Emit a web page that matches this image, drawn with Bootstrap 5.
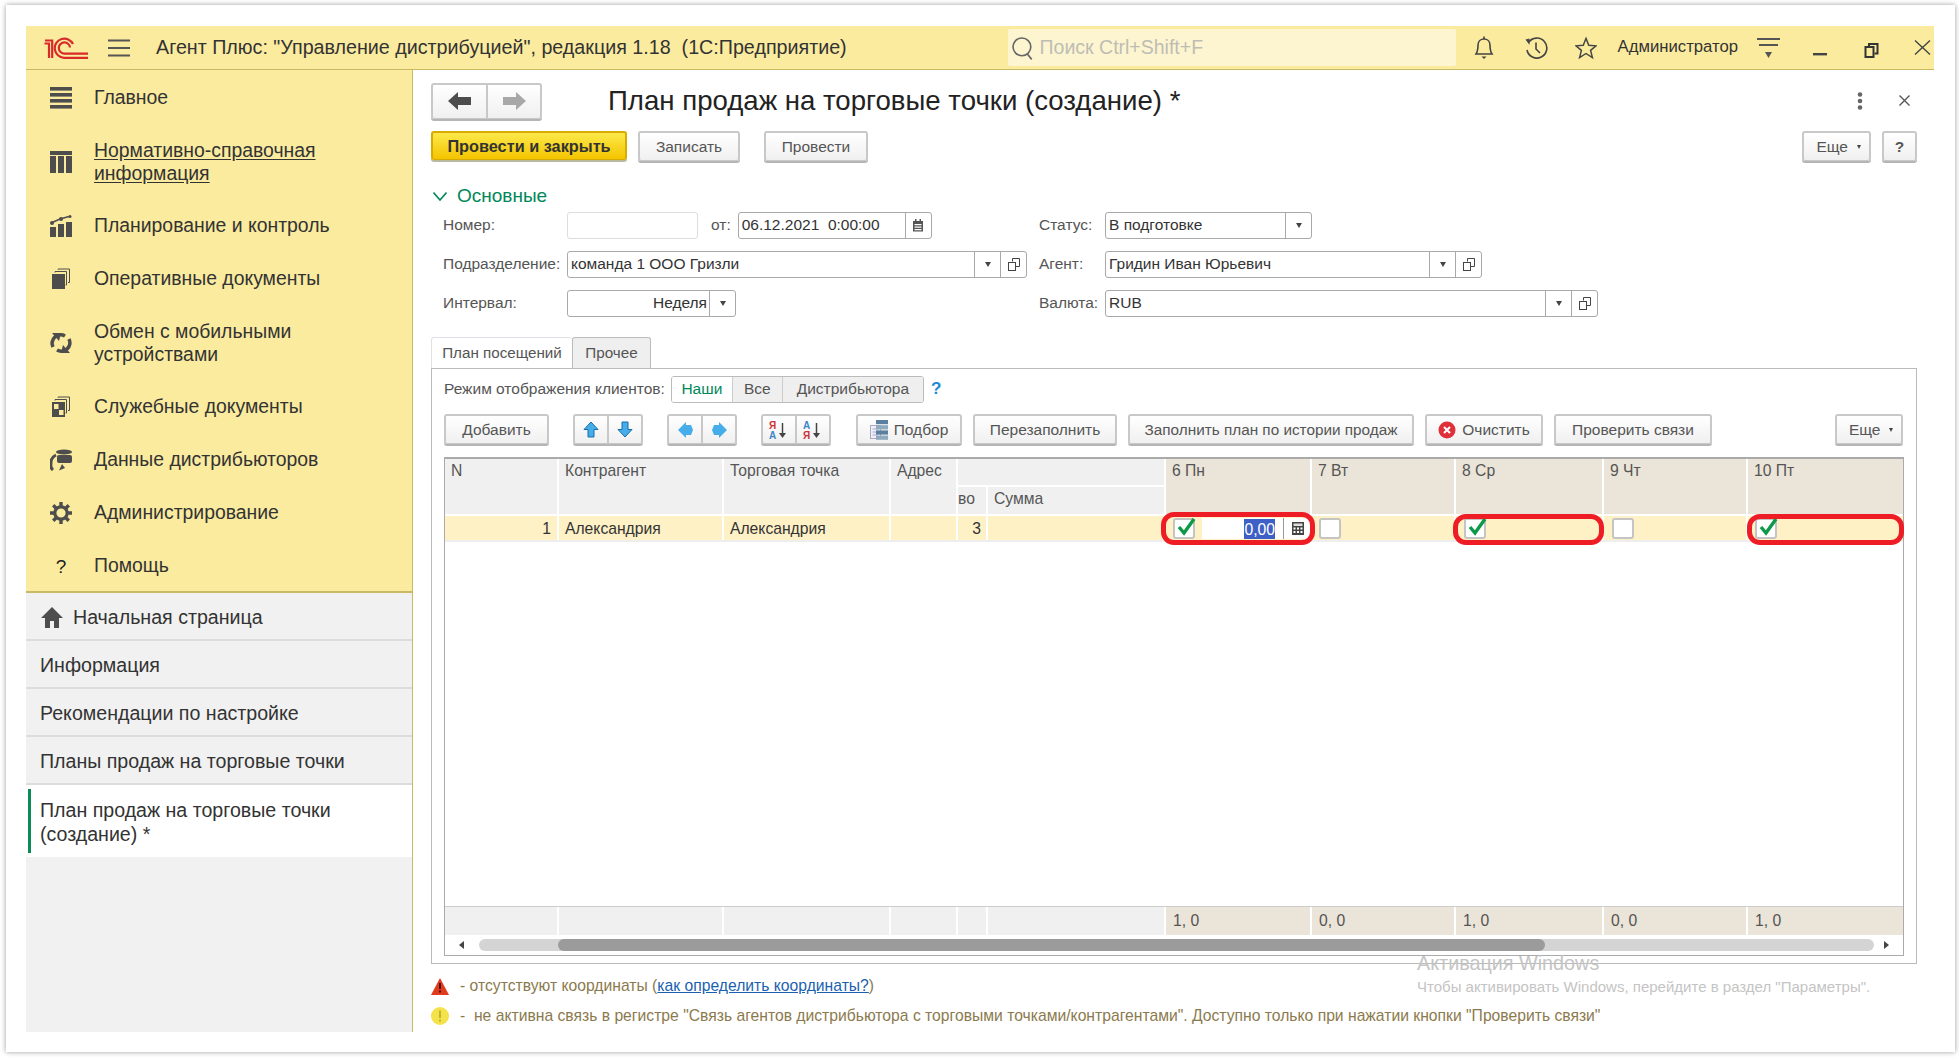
<!DOCTYPE html>
<html lang="ru">
<head>
<meta charset="utf-8">
<title>План продаж</title>
<link rel="stylesheet" href="https://cdn.jsdelivr.net/npm/bootstrap@5.3.0/dist/css/bootstrap.min.css">
<style>
html,body{height:100%;margin:0;background:#fff;overflow:hidden}
body{font-family:"Liberation Sans",Arial,sans-serif;font-size:15.5px;color:#333;line-height:1.2}
.appwin{margin:5px 4px 0 6px;height:1047px;padding:21px 21px 20px 20px;background:#fff;box-shadow:0 0 5px rgba(0,0,0,.4)}
.inner{height:1006px}
.topbar{height:44px;background:#fbeb9f;border-bottom:1px solid #c9b965;font-size:19.7px;color:#333}
.logo1c{margin-left:18px;width:44px;height:22px}
.burger{margin-left:20px;width:22px;height:18px}
.apptitle{margin-left:26px;white-space:pre}
.searchbox{position:relative;margin-left:auto;width:448px;height:37px;background:#fdf5d0;border-radius:2px;color:#bdbdb5;font-size:19.5px;padding-left:32px;margin-right:17px}
.searchbox svg{position:absolute;left:3px;top:7px}
.ticon{width:22px;height:24px}
.tuser{font-size:16.7px;margin:0 19px 0 12px}
.sidebar{width:387px;background:#f1f1f1;border-right:1px solid #c9b965}
.menuyellow{background:#fbeb9f;height:523px;border-bottom:2px solid #c9b965;font-size:19.4px;color:#333}
.mitem{position:absolute;left:0;right:0;display:flex;align-items:center;line-height:23px}
.mwrap{position:relative}
.mico{width:22px;height:22px;margin-left:24px;margin-right:22px;flex:none}
.mhelp{font-size:19px;text-align:center;color:#222}
.menuyellow u{text-underline-offset:2px}
.pagelist{font-size:19.6px}
.pagelist .list-group-item{background:#f1f1f1;border-color:#dcdcdc;border-width:0 0 2px;color:#333;padding:2px 10px 0 14px;height:48px;display:flex;align-items:center;line-height:24px}
.pagelist .list-group-item.curpage{background:#fff;height:72px;position:relative}
.curpage::before{content:"";position:absolute;left:2px;top:4px;bottom:4px;width:3px;background:#0d8a55}
.mainpane{padding:12px 17px 0 18px;background:#fff}
.navbtns{width:111px;height:36px}
.pagetitle{font-size:27.6px;margin:0 0 0 66px;font-weight:400;color:#222;line-height:37px}
.btn1c{--bs-btn-padding-y:0;--bs-btn-padding-x:0;--bs-btn-font-size:15.5px;--bs-btn-border-radius:3px;height:30px;background:linear-gradient(#fff,#f0f0f0);border:2px solid #c8c8c8;border-bottom-width:1px;box-shadow:0 2px 0 #b5b5b5;color:#555;display:inline-flex;align-items:center;justify-content:center;white-space:nowrap;flex:none;line-height:1}
.btn1c:hover{background:#eee}
.btnmain{--bs-btn-font-size:16.3px;background:linear-gradient(#fce94a,#f4c400);border-color:#d8ab00;box-shadow:0 2px 0 #b9b9a0;color:#333;font-weight:700;width:196px;height:29px}
.btnmore{padding-left:4px}
.sect{color:#00885a;font-size:19px;margin-top:24px;height:20px;padding-left:2px;line-height:20px}
.sect svg{margin-right:10px}
.frm{margin-top:6px}
.frow{height:27px;margin-bottom:12px;display:flex;align-items:center;color:#555}
.flab{padding-left:12px;width:136px;flex:none}
.frlab{width:66px;flex:none}
.fld{height:27px;border:1px solid #a9a9a9;border-radius:3px;background:#fff;display:flex;align-items:center;color:#333;flex:none;overflow:hidden}
.fld .ftxt{flex:1;padding-left:3px;white-space:nowrap}
.fbtn{width:26px;height:100%;border-left:1px solid #a9a9a9;display:flex;align-items:center;justify-content:center;flex:none}
.caret1{width:0;height:0;border-left:3px solid transparent;border-right:3px solid transparent;border-top:5px solid #444}
.tabs1c{margin-top:8px;--bs-nav-tabs-border-width:0;height:31px;flex-wrap:nowrap}
.tabs1c .nav-link{color:#555;padding:0;height:31px;display:flex;align-items:center;justify-content:center;border:1px solid #bbb;border-bottom:0;border-radius:3px 3px 0 0;background:#efefef;font-size:15.2px}
.tabs1c .nav-link.active{background:#fff;color:#555;border-right:0}
.tabpane{height:596px;border:1px solid #bbb;padding:7px 12px 7px 12px}
.moderow{height:27px;color:#555}
.radgrp{margin-left:6px;height:27px;border:1px solid #bbb;border-radius:3px;overflow:hidden}
.radgrp span{display:flex;align-items:center;justify-content:center;height:100%;background:#efefef;border-left:1px solid #ccc}
.radgrp span:first-child{background:#fff;color:#00885a;border-left:0}
.toolrow{margin-top:11px;height:30px;gap:11px}
.grp{display:inline-flex;width:70px}
.grp .btn1c{width:35px}
.grp .btn1c:first-child{border-radius:3px 0 0 3px;border-right-width:1px}
.grp .btn1c:last-child{border-radius:0 3px 3px 0;border-left-width:1px}
.gridbox{margin-top:13px;height:500px;border:1px solid #aaa;border-top-width:2px;font-size:15.7px}
.gcols{display:grid;grid-template-columns:114px 165px 167px 67px 30px 178px 146px 144px 148px 144px 1fr}
.gh{background:#f0f0f0;border-right:2px solid #fff;border-bottom:2px solid #fff;color:#555;padding:3px 6px;white-space:nowrap;overflow:hidden}
.gh.day{background:#ebe4d8}
.gr2{grid-row:span 2}
.gc2{grid-column:span 2}
.ghead{grid-template-rows:28px 29px}
.grow{height:26px;border-bottom:2px solid #eee}
.gc{background:#fef1c6;border-right:2px solid #fff;padding:0 6px;height:24px;line-height:25px;position:relative;white-space:nowrap}
.gfoot{margin-top:auto;height:28px;border-top:1px solid #ccc}
.gf{background:#f0f0f0;border-right:2px solid #fff;padding:0 7px;line-height:28px;color:#555}
.gf.day{background:#ebe4d8}
.chk{position:absolute;left:7px;top:2px;width:22px;height:21px;background:#fff;border:2px solid #c4c4c4;border-radius:3px}
.chk svg{position:absolute;left:1px;top:-4px}
.hl{position:absolute;border:5.5px solid #ee1c25;border-radius:13px;pointer-events:none;z-index:2}
.cellinput{position:absolute;left:36px;right:-1px;top:2px;height:21px;background:#fff;display:flex;align-items:center;justify-content:flex-end;padding-right:36px}
.cellinput b{font-weight:400;background:#3d5fc6;color:#fff;line-height:18px;padding-top:2px}
.calc{position:absolute;right:0;top:0;bottom:0;width:28px;border-left:1px solid #999;display:flex;align-items:center;justify-content:center}
.hscroll{height:21px;padding:0 0 0 14px}
.strack{position:relative;flex:1;margin:0 10px 0 15px;height:12px;background:#d4d4d4;border-radius:6px}
.sthumb{position:absolute;left:79px;width:987px;top:0;bottom:0;background:#9b9b9b;border-radius:6px}
.sarr{width:0;height:0;border-top:4px solid transparent;border-bottom:4px solid transparent}
.notes{color:#8b7a4e;font-size:15.7px;padding-top:7px;position:relative}
.nline{height:30px;white-space:pre}
.nline a{color:#1b5fb0}
.nline svg{margin-right:11px;flex:none}
.winmark{position:absolute;left:986px;top:-10px;color:#c4c4c4;line-height:1}
.winmark .w1{font-size:19.8px;margin-bottom:5px}
.winmark .w2{font-size:15px}
.qm{color:#1b8ad6;font-size:17px;margin-left:7px;font-weight:700}
</style>
</head>
<body>
<div class="appwin">
<div class="inner d-flex flex-column">

  <header class="topbar d-flex align-items-center flex-none">
    <svg class="logo1c" viewBox="0 0 44 22" fill="none" stroke="#d92a2a">
      <path d="M0.5 6.5 L5 6.5 V21 M1 3.5 H8.2 V21" stroke-width="2.2"/>
      <path d="M29 7 A9.6 9.6 0 1 0 20 20.8 H44" stroke-width="2.2"/>
      <path d="M26 10.5 A5.6 5.6 0 1 0 20.5 16.6 H44" stroke-width="2.2"/>
    </svg>
    <svg class="burger" viewBox="0 0 22 18" stroke="#555" stroke-width="2"><path d="M0 1.5H22M0 9H22M0 16.5H22"/></svg>
    <span class="apptitle">Агент Плюс: "Управление дистрибуцией", редакция 1.18  (1С:Предприятие)</span>
    <div class="searchbox d-flex align-items-center">
      <svg width="24" height="25" viewBox="0 0 22 23" fill="none" stroke="#666" stroke-width="1.5"><circle cx="10" cy="10" r="8.2"/><path d="M15 16.5 L19 21.5"/></svg>
      Поиск Ctrl+Shift+F
    </div>
    <svg class="ticon" viewBox="0 0 22 24" fill="none" stroke="#444" stroke-width="1.6" style="margin-right:29px"><path d="M3 18 C5 15 5 13 5 9 C5 5 8 3 11 3 C14 3 17 5 17 9 C17 13 17 15 19 18 Z"/><path d="M11 0.5V3"/><path d="M8.5 20.5 H13.5 L11 23 Z" fill="#444" stroke="none"/></svg>
    <svg width="24" height="24" viewBox="0 0 24 24" fill="none" stroke="#444" stroke-width="1.6" style="margin-right:27px"><path d="M4.5 6.5 A10 10 0 1 1 3 14"/><path d="M1.5 3.5 L5.5 2.5 L5.5 9 Z" fill="#444" stroke="none"/><path d="M12 6.5V13L16 17"/></svg>
    <svg class="ticon" viewBox="0 0 24 24" fill="none" stroke="#444" stroke-width="1.6" style="margin-right:9px"><path d="M12 1.5 L15 9 L23 9.6 L17 14.6 L19 22.5 L12 18 L5 22.5 L7 14.6 L1 9.6 L9 9 Z"/></svg>
    <span class="tuser">Администратор</span>
    <svg width="23" height="24" viewBox="0 0 23 24" stroke="#555" stroke-width="2"><path d="M0 3H23M2 9H21"/><path d="M8 16H15L11.5 22Z" fill="#555" stroke="none"/></svg>
    <svg width="14" height="24" viewBox="0 0 14 24" fill="#444" style="margin-left:33px"><rect y="17" width="14" height="2.4"/></svg>
    <svg width="15" height="24" viewBox="0 0 15 24" fill="none" stroke="#333" stroke-width="2" style="margin-left:37px"><rect x="1.5" y="11" width="8" height="10"/><path d="M5 10V8H13.5V17.5H10.5"/></svg>
    <svg width="17" height="15" viewBox="0 0 17 15" fill="none" stroke="#444" stroke-width="1.4" style="margin-left:35px;margin-right:3px"><path d="M1 0.5L16 14.5M16 0.5L1 14.5"/></svg>
  </header>

  <div class="d-flex flex-grow-1" style="min-height:0">
    <aside class="sidebar flex-none d-flex flex-column">
      <nav class="menuyellow mwrap flex-none">
        <div class="mitem" style="top:16px"><svg class="mico" viewBox="0 0 22 22" fill="#4d4d4d"><rect y="0" width="22" height="3.6"/><rect y="6" width="22" height="3.6"/><rect y="12" width="22" height="3.6"/><rect y="18" width="22" height="3.6"/></svg>Главное</div>
        <div class="mitem" style="top:69px"><svg class="mico" viewBox="0 0 22 22" fill="#4d4d4d"><rect y="0" width="22" height="4"/><rect y="5" width="6" height="17"/><rect x="8" y="5" width="6" height="17"/><rect x="16" y="5" width="6" height="17"/></svg><span><u>Нормативно-справочная<br>информация</u></span></div>
        <div class="mitem" style="top:144px"><svg class="mico" viewBox="0 0 22 22" fill="#4d4d4d"><rect x="0" y="12" width="6" height="10"/><rect x="8" y="9" width="6" height="13"/><rect x="16" y="7" width="6" height="15"/><path d="M1 8 L10 4 L19 1.5" stroke="#4d4d4d" stroke-width="1.5" fill="none"/><circle cx="2" cy="8" r="2"/><circle cx="11" cy="4" r="2"/><circle cx="20" cy="1.5" r="1.5"/></svg>Планирование и контроль</div>
        <div class="mitem" style="top:197px"><svg class="mico" viewBox="0 0 22 22" fill="#4d4d4d"><rect x="2" y="6" width="13" height="15"/><path d="M5 4.5V3.5H16.5V17H15.5" fill="none" stroke="#4d4d4d"/><path d="M8 1.5V1H19.5V14.5H18" fill="none" stroke="#4d4d4d"/></svg>Оперативные документы</div>
        <div class="mitem" style="top:250px"><svg class="mico" viewBox="0 0 22 22" fill="none" stroke="#4d4d4d" stroke-width="3.6"><path d="M3 15 A8.5 8.5 0 0 1 15 4"/><path d="M19 7 A8.5 8.5 0 0 1 7 18"/><path d="M2 1 H11 L9 9Z" fill="#4d4d4d" stroke="none"/><path d="M20 21 H11 L13 13Z" fill="#4d4d4d" stroke="none"/></svg><span>Обмен с мобильными<br>устройствами</span></div>
        <div class="mitem" style="top:325px"><svg class="mico" viewBox="0 0 22 22" fill="#4d4d4d"><rect x="2" y="6" width="13" height="15"/><rect x="4" y="8" width="4.5" height="5" fill="#fbeb9f"/><rect x="9" y="14" width="4.5" height="5" fill="#fbeb9f"/><path d="M5 4.5V3.5H16.5V17H15.5" fill="none" stroke="#4d4d4d"/><path d="M8 1.5V1H19.5V14.5H18" fill="none" stroke="#4d4d4d"/></svg>Служебные документы</div>
        <div class="mitem" style="top:378px"><svg class="mico" viewBox="0 0 22 22" fill="#4d4d4d"><ellipse cx="14" cy="3" rx="8" ry="2.6"/><rect x="7" y="6" width="15" height="8" rx="2"/><path d="M6 6 A9 9 0 0 0 1 15 A6 6 0 0 0 3 21" fill="none" stroke="#4d4d4d" stroke-width="3"/><path d="M9 21.5 L12 15 L15 19 Z"/></svg>Данные дистрибьюторов</div>
        <div class="mitem" style="top:431px"><svg class="mico" viewBox="0 0 22 22" fill="none"><circle cx="11" cy="11" r="6.2" stroke="#4d4d4d" stroke-width="3.2"/><path d="M11 0V4M11 18V22M0 11H4M18 11H22M3.2 3.2L6 6M16 16L18.8 18.8M18.8 3.2L16 6M6 16L3.2 18.8" stroke="#4d4d4d" stroke-width="3.4"/></svg>Администрирование</div>
        <div class="mitem" style="top:484px"><span class="mico mhelp">?</span>Помощь</div>
      </nav>
      <div class="list-group list-group-flush pagelist">
        <div class="list-group-item"><svg width="22" height="21" viewBox="0 0 22 21" fill="#4d4d4d" style="margin-right:10px;margin-left:1px;flex:none"><path d="M11 0 L22 11 H18 V21 H13 V14 H9 V21 H4 V11 H0 Z"/></svg>Начальная страница</div>
        <div class="list-group-item">Информация</div>
        <div class="list-group-item">Рекомендации по настройке</div>
        <div class="list-group-item">Планы продаж на торговые точки</div>
        <div class="list-group-item curpage"><span>План продаж на торговые точки<br>(создание) *</span></div>
      </div>
    </aside>

    <main class="mainpane flex-grow-1 d-flex flex-column" style="min-width:0">
      <div class="d-flex align-items-center">
        <div class="navbtns d-inline-flex">
          <button class="btn btn1c" style="width:56px;height:36px;border-radius:3px 0 0 3px;border-right-width:1px"><svg width="24" height="18" viewBox="0 0 24 18" fill="#4d4d4d"><path d="M0 9 L10 0 V5 H23 V13 H10 V18Z"/></svg></button>
          <button class="btn btn1c" style="width:55px;height:36px;border-radius:0 3px 3px 0;border-left-width:1px"><svg width="24" height="18" viewBox="0 0 24 18" fill="#a8a8a8"><path d="M24 9 L14 0 V5 H1 V13 H14 V18Z"/></svg></button>
        </div>
        <h1 class="pagetitle">План продаж на торговые точки (создание) *</h1>
        <svg class="ms-auto" width="6" height="18" viewBox="0 0 6 18" fill="#666" style="margin-right:36px"><circle cx="3" cy="2.5" r="2.3"/><circle cx="3" cy="9" r="2.3"/><circle cx="3" cy="15.5" r="2.3"/></svg>
        <svg width="11" height="11" viewBox="0 0 11 11" stroke="#555" stroke-width="1.4" style="margin-right:7px"><path d="M0.5 0.5L10.5 10.5M10.5 0.5L0.5 10.5"/></svg>
      </div>
      <div class="d-flex" style="margin-top:12px;height:31px">
        <button class="btn btn1c btnmain">Провести и закрыть</button>
        <button class="btn btn1c" style="width:102px;margin-left:11px">Записать</button>
        <button class="btn btn1c" style="width:104px;margin-left:24px">Провести</button>
        <button class="btn btn1c btnmore ms-auto" style="width:69px">Еще&nbsp;&nbsp;<span class="caret1" style="border-width:4px 2.5px 0"></span></button>
        <button class="btn btn1c" style="width:35px;margin-left:11px;font-weight:700">?</button>
      </div>
      <div class="sect"><svg width="14" height="9" viewBox="0 0 14 9" fill="none" stroke="#00885a" stroke-width="1.6"><path d="M0.5 0.5L7 8L13.5 0.5"/></svg>Основные</div>

      <div class="frm d-flex">
        <div style="width:608px" class="flex-none">
          <div class="frow"><span class="flab">Номер:</span><div class="fld" style="width:131px;border-color:#ddd"></div><span style="margin:0 7px 0 13px">от:</span><div class="fld" style="width:194px"><span class="ftxt">06.12.2021&nbsp; 0:00:00</span><span class="fbtn"><svg width="12" height="13" viewBox="0 0 12 13" fill="#555"><path d="M1 2H11V12.5H1Z"/><rect x="3" y="0" width="1.5" height="3"/><rect x="7.5" y="0" width="1.5" height="3"/><path d="M2.5 5H9.5V6.2H2.5ZM2.5 7.5H9.5V8.7H2.5ZM2.5 10H9.5V11.2H2.5Z" fill="#fff"/></svg></span></div></div>
          <div class="frow"><span class="flab">Подразделение:</span><div class="fld" style="width:460px"><span class="ftxt">команда 1 ООО Гризли</span><span class="fbtn"><i class="caret1"></i></span><span class="fbtn"><svg width="12" height="13" viewBox="0 0 12 13" fill="none" stroke="#444"><path d="M4.5 3.5V0.5H11.5V8.5H7.5"/><rect x="0.5" y="4.5" width="7" height="8"/></svg></span></div></div>
          <div class="frow"><span class="flab">Интервал:</span><div class="fld" style="width:169px"><span class="ftxt text-end" style="padding-right:2px">Неделя</span><span class="fbtn"><i class="caret1"></i></span></div></div>
        </div>
        <div>
          <div class="frow"><span class="frlab">Статус:</span><div class="fld" style="width:207px"><span class="ftxt">В подготовке</span><span class="fbtn"><i class="caret1"></i></span></div></div>
          <div class="frow"><span class="frlab">Агент:</span><div class="fld" style="width:377px"><span class="ftxt">Гридин Иван Юрьевич</span><span class="fbtn"><i class="caret1"></i></span><span class="fbtn"><svg width="12" height="13" viewBox="0 0 12 13" fill="none" stroke="#444"><path d="M4.5 3.5V0.5H11.5V8.5H7.5"/><rect x="0.5" y="4.5" width="7" height="8"/></svg></span></div></div>
          <div class="frow"><span class="frlab">Валюта:</span><div class="fld" style="width:493px"><span class="ftxt">RUB</span><span class="fbtn"><i class="caret1"></i></span><span class="fbtn"><svg width="12" height="13" viewBox="0 0 12 13" fill="none" stroke="#444"><path d="M4.5 3.5V0.5H11.5V8.5H7.5"/><rect x="0.5" y="4.5" width="7" height="8"/></svg></span></div></div>
        </div>
      </div>

      <ul class="nav nav-tabs tabs1c">
        <li class="nav-item"><span class="nav-link active" style="width:141px">План посещений</span></li>
        <li class="nav-item"><span class="nav-link" style="width:79px">Прочее</span></li>
      </ul>
      <section class="tabpane d-flex flex-column">
        <div class="moderow d-flex align-items-center">
          <span>Режим отображения клиентов:</span>
          <div class="radgrp d-flex">
            <span style="width:60px">Наши</span><span style="width:50px">Все</span><span style="width:141px">Дистрибьютора</span>
          </div>
          <span class="qm">?</span>
        </div>
        <div class="toolrow d-flex">
          <button class="btn btn1c" style="width:105px">Добавить</button>
          <div class="grp" style="margin-left:13px">
            <button class="btn btn1c"><svg width="16" height="17" viewBox="0 0 16 17" fill="#45aeea" stroke="#1a6ea8"><path d="M8 1L15 8.5H11V16H5V8.5H1Z"/></svg></button>
            <button class="btn btn1c"><svg width="16" height="17" viewBox="0 0 16 17" fill="#45aeea" stroke="#1a6ea8"><path d="M8 16L15 8.5H11V1H5V8.5H1Z"/></svg></button>
          </div>
          <div class="grp" style="margin-left:13px">
            <button class="btn btn1c"><svg width="17" height="16" viewBox="0 0 17 16" fill="#45aeea"><path d="M1 8L9 0V3H14L16 8L14 13H9V16Z"/></svg></button>
            <button class="btn btn1c"><svg width="17" height="16" viewBox="0 0 17 16" fill="#45aeea"><path d="M16 8L8 0V3H3L1 8L3 13H8V16Z"/></svg></button>
          </div>
          <div class="grp" style="margin-left:13px">
            <button class="btn btn1c"><svg width="20" height="20" viewBox="0 0 20 20"><text x="0" y="9" font-size="10" font-family="Liberation Sans" font-weight="700" fill="#c33">Я</text><text x="0" y="19" font-size="10" font-family="Liberation Sans" font-weight="700" fill="#3b86c8">А</text><path d="M13.5 3V16" stroke="#444" stroke-width="1.5"/><path d="M10 13H17L13.5 18Z" fill="#444"/></svg></button>
            <button class="btn btn1c"><svg width="20" height="20" viewBox="0 0 20 20"><text x="0" y="9" font-size="10" font-family="Liberation Sans" font-weight="700" fill="#3b86c8">А</text><text x="0" y="19" font-size="10" font-family="Liberation Sans" font-weight="700" fill="#c33">Я</text><path d="M13.5 3V16" stroke="#444" stroke-width="1.5"/><path d="M10 13H17L13.5 18Z" fill="#444"/></svg></button>
          </div>
          <button class="btn btn1c" style="width:106px;margin-left:14px"><svg width="18" height="20" viewBox="0 0 18 20" style="margin-right:6px"><rect x="0.5" y="5.5" width="10" height="13" fill="#eef" stroke="#aab"/><path d="M2.5 9H8.5M2.5 12H8.5M2.5 15H8.5" stroke="#aab"/><rect x="6" y="0" width="12" height="4.2" fill="#5b7f9e"/><rect x="6" y="5.2" width="12" height="4.2" fill="#8fa9bd"/><rect x="6" y="10.4" width="12" height="4.2" fill="#5b7f9e"/><rect x="6" y="15.6" width="12" height="4.2" fill="#8fa9bd"/></svg>Подбор</button>
          <button class="btn btn1c" style="width:144px">Перезаполнить</button>
          <button class="btn btn1c" style="width:286px;--bs-btn-font-size:15.3px">Заполнить план по истории продаж</button>
          <button class="btn btn1c" style="width:118px"><svg width="18" height="18" viewBox="0 0 18 18" style="margin-right:6px"><circle cx="9" cy="9" r="8.5" fill="#e0303a"/><path d="M6 6L12 12M12 6L6 12" stroke="#fff" stroke-width="2"/></svg>Очистить</button>
          <button class="btn btn1c" style="width:158px">Проверить связи</button>
          <button class="btn btn1c btnmore ms-auto" style="width:68px;margin-right:1px">Еще&nbsp;&nbsp;<span class="caret1" style="border-width:4px 2.5px 0"></span></button>
        </div>

        <div class="gridbox d-flex flex-column">
          <div class="gcols ghead">
            <div class="gh gr2">N</div>
            <div class="gh gr2">Контрагент</div>
            <div class="gh gr2">Торговая точка</div>
            <div class="gh gr2">Адрес</div>
            <div class="gh gc2"></div>
            <div class="gh day gr2">6 Пн</div>
            <div class="gh day gr2">7 Вт</div>
            <div class="gh day gr2">8 Ср</div>
            <div class="gh day gr2">9 Чт</div>
            <div class="gh day gr2" style="border-right:0">10 Пт</div>
            <div class="gh" style="padding-left:0">во</div>
            <div class="gh">Сумма</div>
          </div>
          <div class="gcols grow">
            <div class="gc text-end">1</div>
            <div class="gc">Александрия</div>
            <div class="gc">Александрия</div>
            <div class="gc"></div>
            <div class="gc text-end" style="padding-right:5px">3</div>
            <div class="gc"></div>
            <div class="gc"><span class="chk"><svg width="22" height="22" viewBox="0 0 22 22" fill="none" stroke="#0c9a4a" stroke-width="3.4"><path d="M3 11L8 17L18 3"/></svg></span><span class="cellinput"><b>0,00</b><span class="calc"><svg width="12" height="13" viewBox="0 0 12 13" fill="#444"><path d="M0 0H12V13H0Z"/><rect x="1.5" y="1.5" width="9" height="2.5" fill="#ddd"/><path d="M1.5 5.5H3.5V7.5H1.5ZM5 5.5H7V7.5H5ZM8.5 5.5H10.5V7.5H8.5ZM1.5 9H3.5V11H1.5ZM5 9H7V11H5ZM8.5 9H10.5V11H8.5Z" fill="#fff"/></svg></span></span><span class="hl" style="inset:-4px -5px -5px -5px"></span></div>
            <div class="gc"><span class="chk"></span></div>
            <div class="gc"><span class="chk" style="left:8px"><svg width="22" height="22" viewBox="0 0 22 22" fill="none" stroke="#0c9a4a" stroke-width="3.4"><path d="M3 11L8 17L18 3"/></svg></span><span class="hl" style="inset:-2px -2px -5px -3px"></span></div>
            <div class="gc"><span class="chk" style="left:8px"></span></div>
            <div class="gc" style="border-right:0"><span class="chk"><svg width="22" height="22" viewBox="0 0 22 22" fill="none" stroke="#0c9a4a" stroke-width="3.4"><path d="M3 11L8 17L18 3"/></svg></span><span class="hl" style="inset:-2px -1px -5px -1px"></span></div>
          </div>
          <div class="gcols gfoot">
            <div class="gf"></div><div class="gf"></div><div class="gf"></div><div class="gf"></div><div class="gf"></div><div class="gf"></div>
            <div class="gf day">1, 0</div><div class="gf day">0, 0</div><div class="gf day">1, 0</div><div class="gf day">0, 0</div><div class="gf day" style="border-right:0">1, 0</div>
          </div>
          <div class="hscroll d-flex align-items-center">
            <span class="sarr" style="border-right:5px solid #444"></span>
            <div class="strack"><div class="sthumb"></div></div>
            <span class="sarr" style="border-left:5px solid #444;margin-right:14px"></span>
          </div>
        </div>
      </section>

      <div class="notes">
        <div class="nline d-flex align-items-center"><svg width="18" height="17" viewBox="0 0 18 17"><path d="M9 0L18 17H0Z" fill="#e23a1e"/><path d="M8 5H10V11H8ZM8 12.5H10V14.5H8Z" fill="#4a1408"/></svg>- отсутствуют координаты (<a href="#">как определить координаты?</a>)</div>
        <div class="nline d-flex align-items-center"><svg width="18" height="18" viewBox="0 0 18 18"><circle cx="9" cy="9" r="9" fill="#f3e24a"/><path d="M8 3.5H10V11H8ZM8 12.5H10V14.5H8Z" fill="#c4b233"/></svg>-  не активна связь в регистре "Связь агентов дистрибьютора с торговыми точками/контрагентами". Доступно только при нажатии кнопки "Проверить связи"</div>
        <div class="winmark"><div class="w1">Активация Windows</div><div class="w2">Чтобы активировать Windows, перейдите в раздел "Параметры".</div></div>
      </div>
    </main>
  </div>
</div>
</div>
<script src="https://cdn.jsdelivr.net/npm/bootstrap@5.3.0/dist/js/bootstrap.bundle.min.js"></script>
</body>
</html>
